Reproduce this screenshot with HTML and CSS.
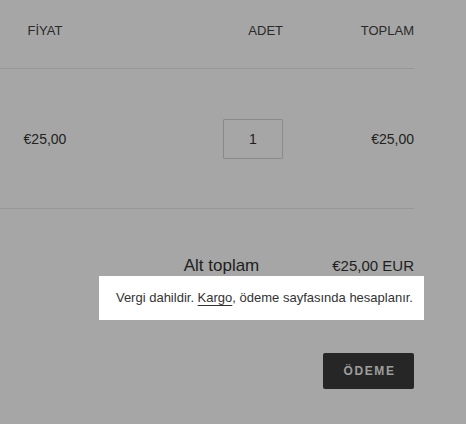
FILE: index.html
```html
<!DOCTYPE html>
<html lang="tr">
<head>
<meta charset="utf-8">
<title>Sepet</title>
<link rel="stylesheet" href="styles.css">
</head>
<body>
<div class="cart">
  <div class="grid thead">
    <div class="c1">FİYAT</div>
    <div class="c2">ADET</div>
    <div class="c3">TOPLAM</div>
  </div>
  <div class="grid row">
    <div class="c1 price">€25,00</div>
    <div class="c2"><div class="qty">1</div></div>
    <div class="c3 price">€25,00</div>
  </div>
  <div class="footer">
    <div class="subtotal">
      <span class="sub-label">Alt toplam</span>
      <span class="sub-value">€25,00 EUR</span>
    </div>
    <div class="note">
      <span class="note-box">Vergi dahildir. <a class="link">Kargo</a>, ödeme sayfasında hesaplanır.</span>
    </div>
    <div class="actions">
      <button class="checkout">ÖDEME</button>
    </div>
  </div>
</div>
</body>
</html>
```

FILE: styles.css
```css
* { box-sizing: border-box; }
html, body {
  margin: 0;
  background: #a6a6a6;
  font-family: "Liberation Sans", Arial, sans-serif;
  color: #262626;
}
.cart {
  width: 414px;
}
.grid {
  display: grid;
  grid-template-columns: 90px 193px 131px;
  border-bottom: 1px solid #979797;
}
.thead {
  height: 69px;
  padding-top: 23px;
  font-size: 13px;
  line-height: 16px;
  color: #2a2a2a;
}
.c1 { text-align: center; }
.c2 { text-align: right; display: flex; justify-content: flex-end; }
.c3 { text-align: right; }
.row {
  height: 140px;
  align-items: center;
  font-size: 14px;
  line-height: 18px;
}
.price { color: #222; }
.qty {
  width: 60px;
  height: 40px;
  border: 1px solid #8a8a8a;
  border-radius: 1px;
  display: flex;
  align-items: center;
  justify-content: center;
  font-size: 14px;
  color: #1e1e1e;
}
.footer {
  padding-top: 47px;
}
.subtotal {
  display: flex;
  justify-content: flex-end;
  align-items: baseline;
  gap: 73px;
  line-height: 20px;
  height: 20px;
}
.sub-label { font-size: 17px; color: #1e1e1e; }
.sub-value { font-size: 15px; color: #1e1e1e; }
.note {
  display: flex;
  justify-content: flex-end;
  margin-right: -10px;
}
.note-box {
  background: #fff;
  padding: 14px 11px 14px 17px;
  font-size: 13px;
  line-height: 16px;
  color: #333;
  white-space: nowrap;
}
.link {
  color: #333;
  text-decoration: underline;
  text-underline-offset: 3px;
  text-decoration-thickness: 1px;
}
.actions {
  display: flex;
  justify-content: flex-end;
  margin-top: 33px;
}
.checkout {
  width: 91px;
  height: 36px;
  background: #262626;
  border: none;
  border-radius: 2px;
  color: #9e9e9e;
  font-family: "Liberation Sans", Arial, sans-serif;
  font-weight: bold;
  font-size: 12px;
  letter-spacing: 1.6px;
  padding: 0 0 0 2px;
}
```
